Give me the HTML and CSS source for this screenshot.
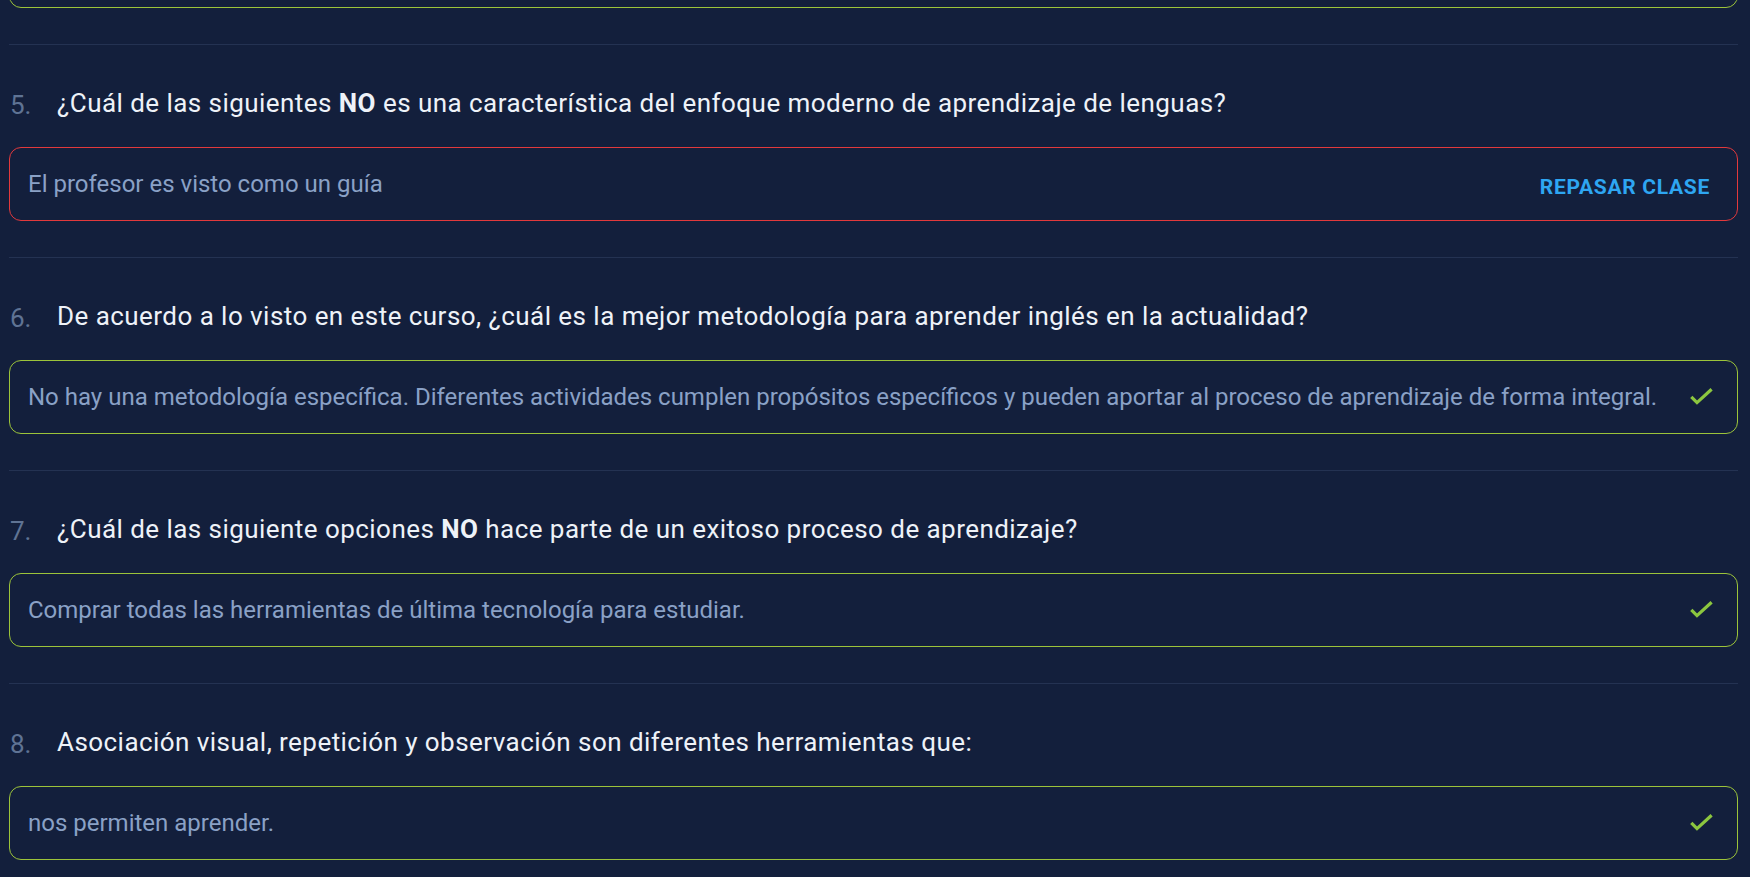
FILE: index.html
```html
<!DOCTYPE html>
<html lang="es">
<head>
<meta charset="utf-8">
<title>Resultados</title>
<link rel="stylesheet" href="styles.css">
</head>
<body>
<main class="quiz">
  <div class="answer answer--ok answer--prev"></div>

  <section class="item">
    <div class="question"><span class="num">5.</span><span class="qtext">¿Cuál de las siguientes <b>NO</b> es una característica del enfoque moderno de aprendizaje de lenguas?</span></div>
    <div class="answer answer--bad">
      <span class="atext">El profesor es visto como un guía</span>
      <button class="review">REPASAR CLASE</button>
    </div>
  </section>

  <section class="item">
    <div class="question"><span class="num">6.</span><span class="qtext">De acuerdo a lo visto en este curso, ¿cuál es la mejor metodología para aprender inglés en la actualidad?</span></div>
    <div class="answer answer--ok">
      <span class="atext">No hay una metodología específica. Diferentes actividades cumplen propósitos específicos y pueden aportar al proceso de aprendizaje de forma integral.</span>
      <svg class="check" viewBox="0 0 28 28"><polyline points="4.3,13.8 10,19.6 24.6,6.2"/></svg>
    </div>
  </section>

  <section class="item">
    <div class="question"><span class="num">7.</span><span class="qtext">¿Cuál de las siguiente opciones <b>NO</b> hace parte de un exitoso proceso de aprendizaje?</span></div>
    <div class="answer answer--ok">
      <span class="atext">Comprar todas las herramientas de última tecnología para estudiar.</span>
      <svg class="check" viewBox="0 0 28 28"><polyline points="4.3,13.8 10,19.6 24.6,6.2"/></svg>
    </div>
  </section>

  <section class="item">
    <div class="question"><span class="num">8.</span><span class="qtext">Asociación visual, repetición y observación son diferentes herramientas que:</span></div>
    <div class="answer answer--ok">
      <span class="atext">nos permiten aprender.</span>
      <svg class="check" viewBox="0 0 28 28"><polyline points="4.3,13.8 10,19.6 24.6,6.2"/></svg>
    </div>
  </section>
</main>
</body>
</html>
```

FILE: styles.css
```css
html, body {
  margin: 0;
  padding: 0;
  background: #131f3c;
  overflow: hidden;
}
body {
  font-family: Roboto, "Liberation Sans", sans-serif;
  color: #eef2f8;
}
.quiz {
  padding: 0 12px 0 9px;
}
.item {
  border-top: 1px solid #243252;
  padding: 42px 0 36px;
}
.question {
  display: flex;
  align-items: baseline;
  font-size: 26px;
  line-height: 32px;
  font-weight: 400;
}
.num {
  flex: 0 0 48px;
  padding-left: 1px;
  box-sizing: border-box;
  color: #5f7394;
  position: relative;
  top: 2px;
}
.qtext {
  letter-spacing: 0.45px;
}
.qtext b {
  font-weight: 700;
}
.answer {
  margin-top: 28px;
  height: 74px;
  box-sizing: border-box;
  border: 1px solid #9cc43a;
  border-radius: 12px;
  display: flex;
  align-items: center;
  justify-content: space-between;
  padding: 0 20px 0 18px;
}
.answer--prev {
  margin-top: -66px;
  margin-bottom: 36px;
}
.answer--bad {
  border-color: #e2393c;
}
.atext {
  font-size: 24px;
  line-height: 28px;
  color: #8aa1c6;
}
.review {
  background: none;
  border: 0;
  padding: 6px 7px 6px 8px;
  margin-top: 6px;
  font-family: Roboto, "Liberation Sans", sans-serif;
  font-weight: 700;
  font-size: 21px;
  letter-spacing: 0.7px;
  color: #2ea6f2;
  cursor: pointer;
}
.check {
  width: 28px;
  height: 28px;
  flex: 0 0 28px;
  fill: none;
  stroke: #8cc63f;
  stroke-width: 3.2;
  margin-right: 2px;
}
```
